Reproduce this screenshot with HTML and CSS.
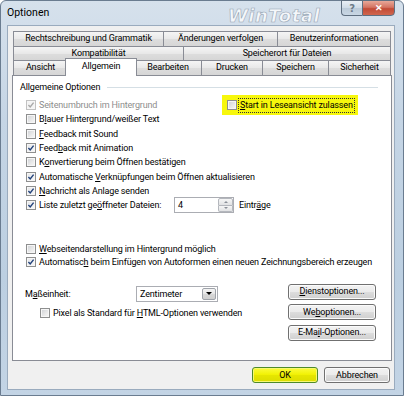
FILE: index.html
```html
<!DOCTYPE html>
<html>
<head>
  <title>Optionen</title>
  <link rel="stylesheet" href="styles.css">
</head>
<body>
  <div class="window">
    <div class="titlebar">
      <span class="title">Optionen</span>
      <span class="watermark">WinTotal</span>
      <div class="caption">
        <span class="cap-help">?</span>
        <span class="cap-close">&#x2715;</span>
      </div>
    </div>

    <div class="client">
      <div class="tabs">
        <div class="tab-row row1">
          <div class="tab" style="width:151px">Rechtschreibung und Grammatik</div>
          <div class="tab" style="width:115px">Änderungen verfolgen</div>
          <div class="tab" style="width:114px">Benutzerinformationen</div>
        </div>
        <div class="tab-row row2">
          <div class="tab" style="width:171px">Kompatibilität</div>
          <div class="tab" style="width:208px">Speicherort für Dateien</div>
        </div>
        <div class="tab-row row3">
          <div class="tab" style="width:55px">Ansicht</div>
          <div class="tab active">Allgemein</div>
          <div class="tab" style="width:68px">Bearbeiten</div>
          <div class="tab" style="width:62px">Drucken</div>
          <div class="tab" style="width:67px">Speichern</div>
          <div class="tab" style="width:63px">Sicherheit</div>
        </div>
      </div>

      <div class="panel">
        <div class="group-head"><span>Allgemeine Optionen</span></div>

        <div class="opts">
          <div class="row first">
            <label class="opt disabled"><span class="cb checked"><svg viewBox="0 0 8 8"><path d="M1.4 4.1 L3.2 6 L6.6 1.6"/></svg></span><span>Seitenumbruch im Hintergrund</span></label>
            <label class="highlight"><span class="cb"></span><span class="focus"><u>S</u>tart in Leseansicht zulassen</span></label>
          </div>
          <label class="row opt"><span class="cb"></span><span>B<u>l</u>auer Hintergrund/weißer Text</span></label>
          <label class="row opt"><span class="cb"></span><span><u>F</u>eedback mit Sound</span></label>
          <label class="row opt"><span class="cb checked"><svg viewBox="0 0 8 8"><path d="M1.4 4.1 L3.2 6 L6.6 1.6"/></svg></span><span>Feed<u>b</u>ack mit Animation</span></label>
          <label class="row opt"><span class="cb"></span><span>K<u>o</u>nvertierung beim Öffnen bestätigen</span></label>
          <label class="row opt"><span class="cb checked"><svg viewBox="0 0 8 8"><path d="M1.4 4.1 L3.2 6 L6.6 1.6"/></svg></span><span>Automatische <u>V</u>erknüpfungen beim Öffnen aktualisieren</span></label>
          <label class="row opt"><span class="cb checked"><svg viewBox="0 0 8 8"><path d="M1.4 4.1 L3.2 6 L6.6 1.6"/></svg></span><span><u>N</u>achricht als Anlage senden</span></label>
          <div class="row">
            <label class="opt spin-label"><span class="cb checked"><svg viewBox="0 0 8 8"><path d="M1.4 4.1 L3.2 6 L6.6 1.6"/></svg></span><span>Liste zuletzt ge<u>ö</u>ffneter Dateien:</span></label>
            <div class="spin">
              <span class="spin-val">4</span>
              <span class="spin-btns">
                <span class="spin-up"></span>
                <span class="spin-down"></span>
              </span>
            </div>
            <span class="spin-unit">Eintr<u>ä</u>ge</span>
          </div>

          <label class="row opt tight gap"><span class="cb"></span><span><u>W</u>ebseitendarstellung im Hintergrund möglich</span></label>
          <label class="row opt tight"><span class="cb checked"><svg viewBox="0 0 8 8"><path d="M1.4 4.1 L3.2 6 L6.6 1.6"/></svg></span><span>Automatisc<u>h</u> beim Einfügen von Autoformen einen neuen Zeichnungsbereich erzeugen</span></label>
        </div>

        <div class="units">
          <div class="units-left">
            <div class="unit-row">
              <span class="unit-label">M<u>a</u>ßeinheit:</span>
              <div class="combo">
                <span>Zentimeter</span>
                <span class="combo-btn"></span>
              </div>
            </div>
            <label class="opt pixel"><span class="cb"></span><span>Pixel als Standard für <u>H</u>TML-Optionen verwenden</span></label>
          </div>
          <div class="units-right">
            <button class="btn"><u>D</u>ienstoptionen...</button>
            <button class="btn">We<u>b</u>optionen...</button>
            <button class="btn">E-Ma<u>i</u>l-Optionen...</button>
          </div>
        </div>
      </div>

      <div class="footer">
        <button class="btn ok">OK</button>
        <button class="btn">Abbrechen</button>
      </div>
    </div>
  </div>
</body>
</html>
```

FILE: styles.css
```css
html, body {
  margin: 0;
  height: 100%;
}
body {
  background: #fff;
  color: #000;
  font-family: Roboto, 'Liberation Sans', sans-serif;
  font-size: 9px;
  letter-spacing: -0.15px;
}
u {
  text-decoration: underline;
  text-underline-offset: 1px;
}

/* window frame */
.window {
  width: 404px;
  height: 396px;
  box-sizing: border-box;
  border: 1px solid #6a7c90;
  border-radius: 6px 6px 0 0;
  background: linear-gradient(#d6e1ec, #c5d5e5 30%, #bccfe1 70%, #c3d4e5);
  padding: 0 8px 5px 6px;
  display: flex;
  flex-direction: column;
}
.titlebar {
  height: 24px;
  display: flex;
  align-items: flex-start;
  position: relative;
}
.title {
  font-size: 10.5px;
  letter-spacing: 0;
  line-height: 14px;
  margin-top: 5px;
}
.watermark {
  position: absolute;
  left: 221px;
  top: 5px;
  font-family: 'DejaVu Sans', sans-serif;
  font-weight: bold;
  font-style: italic;
  font-size: 18px;
  line-height: 20px;
  letter-spacing: 0.5px;
  color: rgba(255, 255, 255, 0.75);
  -webkit-text-stroke: 0.6px #97a5b4;
}
.caption {
  margin-left: auto;
  margin-top: -1px;
  display: flex;
}
.cap-help, .cap-close {
  height: 16px;
  box-sizing: border-box;
  border: 1px solid #5f6f80;
  display: flex;
  align-items: center;
  justify-content: center;
}
.cap-help {
  width: 21px;
  border-right: none;
  border-radius: 0 0 0 4px;
  background: linear-gradient(#e9eff5, #cfdbe6 50%, #bccbd9 51%, #c9d7e4);
  color: #6d7b88;
  font-family: 'DejaVu Sans', sans-serif;
  font-size: 10px;
  font-weight: bold;
}
.cap-close {
  width: 33px;
  border-radius: 0 0 4px 0;
  background: linear-gradient(#e8a898, #d47463 45%, #c24b36 55%, #d0664e);
  color: #fff;
  font-size: 9px;
  font-weight: bold;
  letter-spacing: 0;
}

/* client area */
.client {
  flex: 1;
  background: #f0f0f0;
  border: 1px solid #9aabbe;
  display: flex;
  flex-direction: column;
}
.tabs {
  margin: 5px 0 0 4px;
  width: 380px;
}
.tab-row {
  display: flex;
  padding-left: 1px;
}
.row1 { height: 15px; }
.row2 { height: 14px; }
.row3 { height: 15px; }
.tab {
  box-sizing: border-box;
  height: 100%;
  margin-right: -1px;
  border: 1px solid #898c95;
  border-bottom: none;
  background: linear-gradient(#f5f5f5, #e8e8e8 50%, #dddddd 51%, #d6d6d6);
  text-align: center;
  line-height: 13px;
  white-space: nowrap;
}
.tab.active {
  position: relative;
  z-index: 2;
  width: 72px;
  height: 18px;
  margin: -2px -3px 0 -2px;
  background: #fff;
  line-height: 14px;
}

.panel {
  position: relative;
  margin-left: 4px;
  width: 380px;
  height: 286px;
  box-sizing: border-box;
  border: 1px solid #898c95;
  background: #fff;
}
.group-head {
  display: flex;
  align-items: center;
  height: 12px;
  margin: 5px 13px 0 7px;
}
.group-head::after {
  content: "";
  flex: 1;
  height: 1px;
  margin-left: 7px;
  background: #d5dfe5;
}

.opts {
  margin-top: 5px;
  padding-left: 13px;
}
.row {
  height: 14.3px;
  display: flex;
  align-items: center;
  white-space: nowrap;
}
.row.first {
  display: grid;
  grid-template-columns: 196px auto;
  align-items: center;
}
.row.tight {
  height: 13px;
}
.row.gap {
  margin-top: 30px;
}
.opt {
  display: flex;
  align-items: center;
  white-space: nowrap;
}
.opt.disabled {
  color: #8d8d8d;
}

/* checkbox */
.cb {
  width: 10px;
  height: 10px;
  box-sizing: border-box;
  flex: none;
  margin-right: 3px;
  border: 1px solid #8e8f8f;
  background: linear-gradient(135deg, #cdd0d4, #ececec 65%, #f8f8f8);
  box-shadow: inset 0 0 0 1px #f6f6f6;
  display: flex;
}
.cb.checked {
  background: linear-gradient(135deg, #e4e6e9, #f7f7f7);
}
.cb svg {
  width: 8px;
  height: 8px;
}
.cb svg path {
  fill: none;
  stroke: #21417a;
  stroke-width: 1.4;
}
.disabled .cb {
  border-color: #c2c2c2;
  background: #f4f4f4;
}
.disabled .cb svg path {
  stroke: #a8a8a8;
}

.highlight {
  display: flex;
  align-items: center;
  width: 136px;
  height: 20px;
  box-sizing: border-box;
  margin: -3px 0;
  padding-left: 5px;
  background: #f7f70c;
}
.highlight .cb {
  margin-right: 2px;
}
.focus {
  outline: 1px dotted #333;
  padding: 0 1px;
  line-height: 13px;
}

/* spin box */
.spin-label {
  width: 148px;
}
.spin {
  width: 60px;
  height: 16px;
  box-sizing: border-box;
  border: 1px solid #abadb3;
  background: #fff;
  display: flex;
  align-items: center;
  justify-content: space-between;
  padding-left: 3px;
}
.spin-btns {
  width: 15px;
  height: 14px;
  display: flex;
  flex-direction: column;
}
.spin-up, .spin-down {
  flex: 1;
  box-sizing: border-box;
  border: 1px solid #b4b7bd;
  background: linear-gradient(#f6f6f6, #e1e2e4);
  display: flex;
  align-items: center;
  justify-content: center;
}
.spin-up { border-radius: 2px 2px 0 0; }
.spin-down { border-radius: 0 0 2px 2px; border-top: none; }
.spin-up::after, .spin-down::after {
  content: "";
  border-left: 2px solid transparent;
  border-right: 2px solid transparent;
}
.spin-up::after { border-bottom: 2px solid #8a8f98; }
.spin-down::after { border-top: 2px solid #8a8f98; }
.spin-unit {
  margin-left: 5px;
}

/* units + side buttons */
.units {
  display: flex;
  margin-top: 15.6px;
}
.units-left {
  flex: 1;
}
.unit-row {
  height: 20px;
  display: flex;
  align-items: center;
}
.unit-label {
  width: 111px;
  margin-left: 12px;
}
.combo {
  width: 82px;
  height: 16px;
  box-sizing: border-box;
  border: 1px solid #abadb3;
  background: #fff;
  display: flex;
  align-items: center;
  justify-content: space-between;
  padding: 0 1px 0 3px;
}
.combo-btn {
  width: 14px;
  height: 12px;
  box-sizing: border-box;
  border: 1px solid #9fa3aa;
  border-radius: 2px;
  background: linear-gradient(#f4f4f4, #e6e6e6 50%, #d8d8d8 51%, #cfcfcf);
  display: flex;
  align-items: center;
  justify-content: center;
}
.combo-btn::after {
  content: "";
  border-left: 3px solid transparent;
  border-right: 3px solid transparent;
  border-top: 3px solid #000;
}
.pixel {
  height: 14px;
  margin: 2px 0 0 27px;
}
.units-right {
  width: 88px;
  margin-right: 15px;
  display: flex;
  flex-direction: column;
  gap: 4.5px;
}

.btn {
  height: 16px;
  box-sizing: border-box;
  padding: 0;
  border: 1px solid #707070;
  border-radius: 3px;
  background: linear-gradient(#f2f2f2, #ebebeb 50%, #dddddd 51%, #cfcfcf);
  box-shadow: inset 0 0 0 1px #fbfbfb;
  font-family: inherit;
  font-size: inherit;
  letter-spacing: inherit;
  color: #000;
  line-height: 13px;
}
.footer {
  display: flex;
  justify-content: flex-end;
  gap: 6px;
  margin-top: 6px;
  padding-right: 4px;
}
.footer .btn {
  width: 66px;
}
.btn.ok {
  border-color: #4e8a2a;
  background: linear-gradient(#fbfb3c, #f1f100 50%, #e6e600 51%, #dcdc00);
  box-shadow: inset 0 0 0 1px #f8f870;
}
```
